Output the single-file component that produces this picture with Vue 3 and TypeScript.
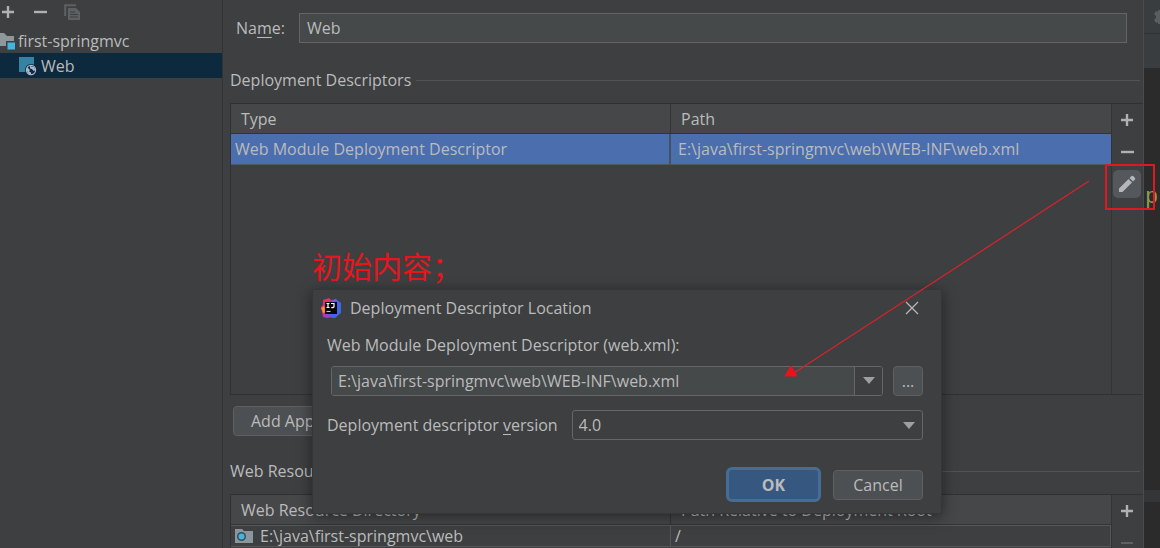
<script setup lang="ts">
import { ref } from 'vue'

const name = ref('Web')
const descriptorPath = ref('E:\\java\\first-springmvc\\web\\WEB-INF\\web.xml')
const version = ref('4.0')
const versions = ['4.0', '3.1', '3.0', '2.5']
const descriptors = [{ type: 'Web Module Deployment Descriptor', path: 'E:\\java\\first-springmvc\\web\\WEB-INF\\web.xml' }]
const resources = [{ dir: 'E:\\java\\first-springmvc\\web', root: '/' }]
</script>

<template>
  <div class="window">
    <aside class="sidebar">
      <div class="side-tools">
        <button class="icon-btn" aria-label="Add">
          <svg width="16" height="16" viewBox="0 0 16 16"><path d="M8 2v12M2 8h12" stroke="#afb1b3" stroke-width="2.4" /></svg>
        </button>
        <button class="icon-btn" aria-label="Remove">
          <svg width="16" height="16" viewBox="0 0 16 16"><path d="M2 8h13" stroke="#afb1b3" stroke-width="2.4" /></svg>
        </button>
        <button class="icon-btn" aria-label="Copy" disabled>
          <svg width="16" height="16" viewBox="0 0 16 16"><path d="M1.200 12V1.200H12" fill="none" stroke="#5e6163" stroke-width="2" /><path d="M4 4h8l4 4v8H4z" fill="#5e6163" /><path d="M6 8h5M6 10.500h8M6 13h8" stroke="#3d3f41" /></svg>
        </button>
      </div>
      <div class="node root">
        <svg width="16" height="18" viewBox="0 0 16 18"><path d="M0 1h4l3 3h7v10H0z" fill="#8f979d" /><path d="M6 9h10v9H6z" fill="#3d3f41" /><path d="M7.500 10.500h7.500v7h-7.500z" fill="#40b6e0" /></svg>
        <span>first-springmvc</span>
      </div>
      <div class="node selected">
        <svg width="20" height="20" viewBox="0 0 20 20"><path d="M1 1h15v15H1z" fill="#3483a3" /><circle cx="13" cy="14" r="6" fill="#0d293e" /><circle cx="13" cy="14" r="4.600" fill="none" stroke="#aab7cf" stroke-width="1.200" /><path d="M9 11l3 3-1 1.500 2 1v2c-3 0-4.500-2.500-4-7.500zM12 10l4 1 1.500 3-2 1-1.500-2-2-.5z" fill="#aab7cf" /></svg>
        <span>Web</span>
      </div>
    </aside>

    <main class="main">
      <div class="name-row">
        <label for="facet-name">Na<u>m</u>e:</label>
        <input id="facet-name" v-model="name" type="text" />
      </div>

      <h2 class="section-title">Deployment Descriptors</h2>
      <section class="panel first">
        <div class="table-area">
          <table>
            <thead><tr><th>Type</th><th>Path</th></tr></thead>
            <tbody>
              <tr v-for="d in descriptors" :key="d.path" class="active"><td>{{ d.type }}</td><td class="path">{{ d.path }}</td></tr>
            </tbody>
          </table>
        </div>
        <div class="tools">
          <button class="icon-btn" aria-label="Add descriptor"><svg width="16" height="16" viewBox="0 0 16 16"><path d="M8 2v12M2 8h12" stroke="#afb1b3" stroke-width="2.400" /></svg></button>
          <button class="icon-btn" aria-label="Remove descriptor"><svg width="16" height="16" viewBox="0 0 16 16"><path d="M2 8h13" stroke="#afb1b3" stroke-width="2.400" /></svg></button>
          <button class="icon-btn edit" aria-label="Edit descriptor"><svg width="18" height="18" viewBox="0 0 18 18"><path d="M1 13.500L10.500 4l3.500 3.500L4.500 17H1zM11.500 3l2-2q.8-.6 1.600 0l1.900 1.900q.6.8 0 1.600l-2 2z" fill="#b4b6b8" /></svg></button>
        </div>
      </section>
      <button class="btn add-app">Add App</button>

      <h2 class="section-title second">Web Resource Directories</h2>
      <section class="panel">
        <div class="table-area">
          <table class="resources">
            <thead><tr><th>Web Resource Directory</th><th>Path Relative to Deployment Root</th></tr></thead>
            <tbody>
              <tr v-for="r in resources" :key="r.dir">
                <td>
                  <div class="dir">
                    <svg width="18" height="14" viewBox="0 0 18 14"><path d="M0 0h7l2 2h9v12H0z" fill="#8b979f" /><circle cx="6.500" cy="7.500" r="4.500" fill="#3c4a52" /><circle cx="6.500" cy="7.500" r="3" fill="#40b6e0" /></svg>
                    <span>{{ r.dir }}</span>
                  </div>
                </td>
                <td>{{ r.root }}</td>
              </tr>
            </tbody>
          </table>
        </div>
        <div class="tools">
          <button class="icon-btn" aria-label="Add resource directory"><svg width="16" height="16" viewBox="0 0 16 16"><path d="M8 2v12M2 8h12" stroke="#afb1b3" stroke-width="2.400" /></svg></button>
          <button class="icon-btn" aria-label="Remove resource directory" disabled><svg width="16" height="16" viewBox="0 0 16 16"><path d="M2 8h12" stroke="#5e6163" stroke-width="2" /></svg></button>
        </div>
      </section>
    </main>

    <div class="editor">
      <div class="editor-bar"><svg width="6" height="14" viewBox="0 0 6 14"><path d="M6 0H4v2L2 1 0 4l2 2v2l-2 2 2 3 2-1v2h2z" fill="#5a5d5f" /></svg></div>
      <div class="editor-bar tabs"></div>
      <div class="code"><span>p</span></div>
      <div class="editor-foot"></div>
    </div>

    <div class="note">初始内容；</div>

    <div class="dialog" role="dialog" aria-labelledby="dialog-title">
      <header class="dialog-head">
        <svg width="20" height="20" viewBox="0 0 20 20">
          <path d="M2 2l6-2 4 4-3 10-7 5-1-6-1-4 2-2z" fill="#e52e70" />
          <path d="M0 10l3-2 2 6-3 1z" fill="#f58b3c" />
          <path d="M11 2l4-1 5 4v10l-6 5-10-1 3-5z" fill="#3f68e8" />
          <path d="M10 3l5-2-1 6z" fill="#8057d8" />
          <path d="M2 19l2-5 6 4-3 2z" fill="#a73bc5" />
          <rect x="4" y="4" width="12" height="12" fill="#08070b" />
          <path d="M5.500 5.500h3M7 5.500v4M5.500 9.500h3M10 5.500h3v3q0 1.300-2.800 1" fill="none" stroke="#fff" stroke-width="1.200" />
          <path d="M5.500 13.500h4" stroke="#ccc" />
        </svg>
        <span id="dialog-title">Deployment Descriptor Location</span>
        <button class="icon-btn close" aria-label="Close"><svg width="14" height="14" viewBox="0 0 14 14"><path d="M1 1l12 12M13 1L1 13" stroke="#b4b6b8" stroke-width="1.300" /></svg></button>
      </header>
      <label class="path-label" for="descriptor-path">Web Module Deployment Descriptor (web.xml):</label>
      <div class="path-row">
        <div class="combo">
          <input id="descriptor-path" v-model="descriptorPath" type="text" />
          <button aria-label="Show history"><svg width="12" height="8" viewBox="0 0 12 8"><path d="M0 0h12L6 7z" fill="#9da0a2" /></svg></button>
        </div>
        <button class="btn browse" aria-label="Browse">...</button>
      </div>
      <div class="version-row">
        <label for="version">Deployment descriptor <u>v</u>ersion</label>
        <div class="select">
          <select id="version" v-model="version"><option v-for="v in versions" :key="v">{{ v }}</option></select>
          <svg width="12" height="8" viewBox="0 0 12 8"><path d="M0 0h12L6 7z" fill="#9da0a2" /></svg>
        </div>
      </div>
      <footer class="actions">
        <button class="btn ok">OK</button>
        <button class="btn">Cancel</button>
      </footer>
    </div>

    <div class="highlight"></div>
    <svg class="arrow" width="310" height="200" viewBox="0 0 310 200"><path d="M309 1L14 193" stroke="#d8232a" stroke-width="1.200" /><path d="M11 186l6 10H5z" fill="#ee1119" stroke="#ee1119" /></svg>
  </div>
</template>

<style>
body {
  background: #3d3f41;
}
</style>

<style scoped>
.window,
.window * {
  box-sizing: border-box;
}
.window {
  position: relative;
  display: flex;
  height: 100vh;
  overflow: hidden;
  background: #3d3f41;
  color: #bbbbbb;
  font: 16px/24px "Open Sans", "Noto Sans CJK SC", sans-serif;
  white-space: nowrap;
}
button,
input,
select {
  font: inherit;
  color: inherit;
  margin: 0;
}
u {
  text-underline-offset: 3px;
}
.icon-btn {
  display: flex;
  align-items: center;
  justify-content: center;
  padding: 0;
  border: 0;
  background: none;
}
.sidebar {
  flex: 0 0 223px;
  border-right: 1px solid #323334;
}
.side-tools {
  display: flex;
  gap: 16px;
  height: 28px;
  align-items: center;
  padding-bottom: 4px;
}
.node {
  display: flex;
  align-items: center;
  height: 25px;
}
.root {
  gap: 2px;
}
.selected {
  gap: 3px;
  padding-left: 18px;
  background: #0d293e;
}
.main {
  flex: 1;
  min-width: 0;
  padding: 13px 0 0 7px;
  border-right: 1px solid #4a4c4e;
}
.name-row {
  display: flex;
  align-items: center;
  gap: 14px;
  padding: 0 16px 0 6px;
}
.name-row input {
  flex: 1;
  min-width: 0;
  height: 30px;
  padding: 0 7px;
  border: 1px solid #646464;
  background: #45494a;
  outline: 0;
}
.section-title {
  display: flex;
  align-items: center;
  gap: 5px;
  margin: 25px 3px 11px 0;
  font-size: 16px;
  font-weight: 400;
}
.section-title::after {
  content: "";
  flex: 1;
  height: 1px;
  background: #515355;
}
.second {
  margin-top: 23px;
}
.panel {
  display: flex;
  border: 1px solid #2f3132;
  border-right: 0;
}
.first {
  height: 292px;
}
.table-area {
  flex: 1;
  min-width: 0;
}
table {
  width: 100%;
  table-layout: fixed;
  border-collapse: separate;
  border-spacing: 0;
}
th,
td {
  height: 30px;
  padding: 0 10px;
  text-align: left;
  font-weight: 400;
}
th {
  background: #464749;
  border-bottom: 1px solid #323435;
}
th:first-child {
  border-right: 1px solid #323435;
}
.active td {
  height: 31px;
  padding: 0 4px;
  background: #4b6eaf;
  border-bottom: 1px solid #505861;
}
.active td:first-child {
  border-right: 2px solid #465260;
}
.active .path {
  padding-left: 7px;
}
.resources td {
  height: 22px;
  padding: 0 4px;
  line-height: 20px;
  border: 1px solid #555759;
  border-left: 0;
}
.dir {
  display: flex;
  align-items: center;
  gap: 7px;
}
.tools {
  width: 32px;
  border-left: 1px solid #323435;
  padding-top: 2px;
}
.tools .icon-btn {
  width: 28px;
  height: 28px;
  margin: 0 2px 4px 1px;
}
.tools .edit {
  border-radius: 5px;
  background: #54575b;
}
.btn {
  height: 30px;
  padding: 0 17px;
  border: 1px solid #5e6060;
  border-radius: 4px;
  background: #4c5052;
}
.add-app {
  display: block;
  width: 340px;
  margin: 11px 0 0 3px;
  text-align: left;
}
.editor {
  display: flex;
  flex-direction: column;
  flex: 0 0 16px;
  background: #2b2b2b;
}
.editor-bar {
  display: flex;
  align-items: center;
  justify-content: flex-end;
  height: 34px;
  background: #3a3d3f;
  border-bottom: 1px solid #2f3132;
}
.tabs {
  border-bottom: 0;
}
.code {
  flex: 1;
  padding: 118px 0 0 1px;
  color: #8f9a57;
  font-family: "Liberation Mono", monospace;
  font-size: 22px;
}
.editor-foot {
  height: 58px;
  border-top: 12px solid #333537;
}
.note {
  position: absolute;
  left: 312px;
  top: 245px;
  color: #e8161c;
  font: 30px/40px "Noto Sans CJK SC", sans-serif;
}
.dialog {
  position: absolute;
  left: 312px;
  top: 289px;
  width: 630px;
  padding: 0 18px 11px 14px;
  border: 1px solid #343637;
  background: #3d3f41;
  box-shadow: 0 3px 14px rgba(0, 0, 0, 0.45);
}
.dialog-head {
  display: flex;
  align-items: center;
  gap: 9px;
  height: 36px;
  margin-left: -6px;
}
.close {
  width: 22px;
  height: 24px;
  margin-left: auto;
}
.path-label {
  display: block;
  margin-top: 7px;
}
.path-row {
  display: flex;
  gap: 10px;
  margin: 9px 0 0 4px;
}
.combo {
  flex: 1;
  display: flex;
  height: 30px;
  border: 1px solid #646668;
  border-radius: 3px;
  overflow: hidden;
}
.combo input {
  flex: 1;
  min-width: 0;
  padding: 0 6px;
  border: 0;
  background: #45494a;
  outline: 0;
}
.combo button {
  display: flex;
  align-items: center;
  justify-content: center;
  width: 28px;
  padding: 0;
  border: 0;
  border-left: 1px solid #646668;
  background: #3d3f41;
}
.browse {
  width: 30px;
  height: 30px;
  padding: 0;
}
.version-row {
  display: flex;
  align-items: center;
  gap: 14px;
  margin-top: 14px;
}
.select {
  position: relative;
  flex: 1;
}
.select select {
  display: block;
  appearance: none;
  width: 100%;
  height: 30px;
  padding: 0 6px;
  border: 1px solid #646668;
  border-radius: 3px;
  background: #3d3f41;
}
.select svg {
  position: absolute;
  right: 8px;
  top: 12px;
  pointer-events: none;
}
.actions {
  display: flex;
  align-items: center;
  justify-content: flex-end;
  gap: 12px;
  margin-top: 27px;
}
.actions .btn {
  width: 90px;
  padding: 0;
}
.actions .ok {
  width: 95px;
  height: 35px;
  border: 3px solid #466d94;
  border-radius: 6px;
  background: #365880;
  font-weight: 700;
}
.highlight {
  position: absolute;
  left: 1105px;
  top: 164px;
  width: 50px;
  height: 46px;
  border: 2px solid #e0181f;
}
.arrow {
  position: absolute;
  left: 780px;
  top: 180px;
  pointer-events: none;
}
</style>
